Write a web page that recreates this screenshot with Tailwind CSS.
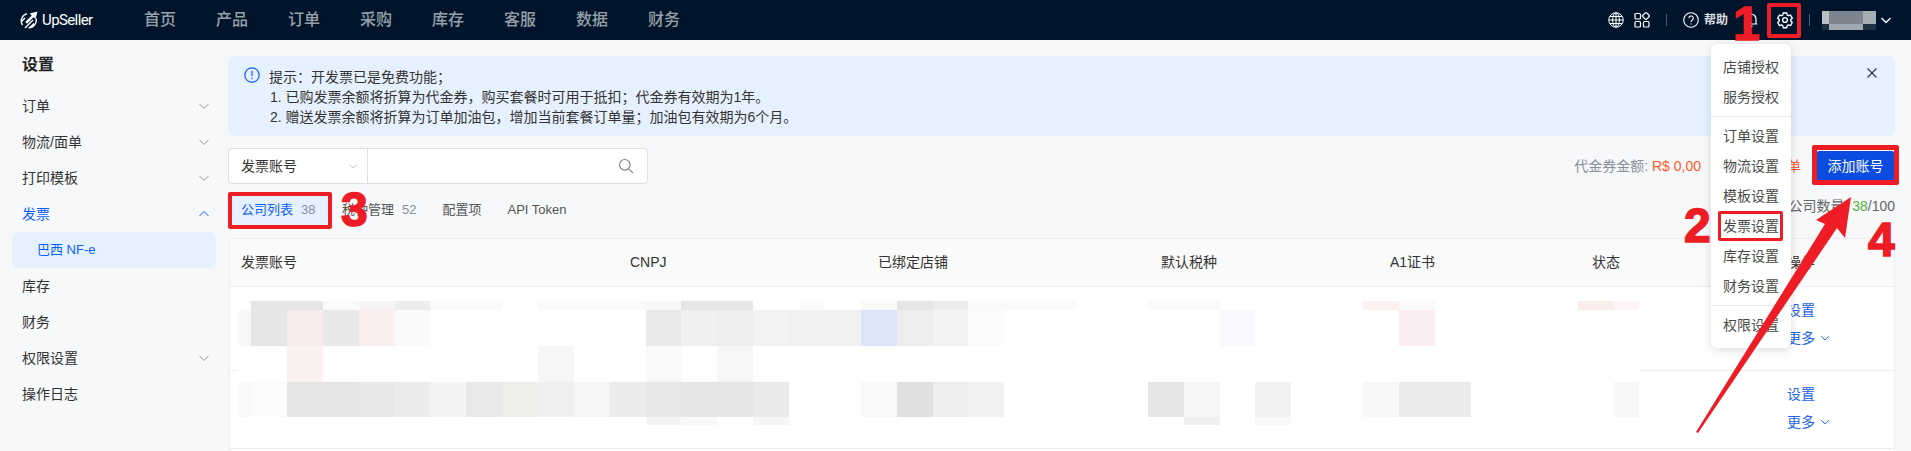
<!DOCTYPE html>
<html lang="zh">
<head>
<meta charset="utf-8">
<script src="https://cdn.jsdelivr.net/npm/@tailwindcss/browser@4"></script>
</head>
<body class="h-[451px] w-[1911px] overflow-hidden bg-[#f7f8fa] font-['Liberation_Sans','Noto_Sans_CJK_SC',sans-serif] text-[14px] text-[#333]">
<div class="relative h-[451px] w-[1911px] overflow-hidden">
  <!-- top bar -->
  <header class="flex h-10 items-center bg-[#00152b] pl-5 pr-[19px]">
    <svg class="h-[18px] w-[18px]" viewBox="0 0 18 18" fill="none" stroke="#fff" stroke-width="1.4"><path d="M7 2.600A7.500 7.500 0 0 0 2.500 14M16 7.500A7.500 7.500 0 0 1 8.500 16.800" /><path fill="#fff" stroke="none" d="M17.500.5l-2 7.500-2-1.800-6.500 6.500-1.800-1.800 6.500-6.500-2-2z"/><path d="M1.500 10.500l3.500-3.500M5 17l8-8M10 16.500l4-4" /></svg>
    <span class="ml-[4px] w-[50px] font-['Roboto',sans-serif] text-[15px] tracking-[-0.6px] text-white">UpSeller</span>
    <nav class="ml-[52px] flex gap-10 text-[16px] font-medium text-white/60">
      <span>首页</span><span>产品</span><span>订单</span><span>采购</span><span>库存</span><span>客服</span><span>数据</span><span>财务</span>
    </nav>
    <div class="ml-auto flex items-center">
      <svg class="h-4 w-4" viewBox="0 0 16 16" fill="none" stroke="#fff" stroke-width="1"><circle cx="8" cy="8" r="7.2"/><ellipse cx="8" cy="8" rx="3.4" ry="7.2"/><path d="M8 .8v14.4M.8 8h14.4M1.8 4.5h12.4M1.8 11.5h12.4"/></svg>
      <svg class="ml-[10px] h-4 w-4" viewBox="0 0 16 16" fill="none" stroke="#fff" stroke-width="1.2"><rect x="1" y="1.5" width="5.5" height="5.5" rx="1"/><rect x="1" y="9.5" width="5.5" height="5.5" rx="1"/><rect x="9.5" y="9.5" width="5.5" height="5.5" rx="1"/><rect x="9.3" y="1.3" width="5.4" height="5.4" rx="1" transform="rotate(45 12 4)"/></svg>
      <span class="ml-4 h-[12px] w-px bg-white/30"></span>
      <svg class="ml-4 h-4 w-4" viewBox="0 0 16 16" fill="none" stroke="#fff" stroke-width="1.1"><circle cx="8" cy="8" r="7.3"/><path d="M5.8 6.2a2.2 2.2 0 1 1 3.4 1.9c-.8.5-1.2 1-1.2 1.8"/><path d="M8 11.4v1.1"/></svg>
      <span class="ml-[5px] text-[12px] font-bold text-white/85">帮助</span>
      <svg class="ml-[15px] h-4 w-4" viewBox="0 0 16 16" fill="none" stroke="#fff" stroke-width="1.2"><path d="M3 12V7a5 5 0 0 1 10 0v5zM1.8 12h12.4M6.5 14.3h3"/></svg>
      <svg class="ml-[17px] h-[18px] w-[18px]" viewBox="0 0 24 24" fill="none" stroke="#fff" stroke-width="1.8" stroke-linejoin="round"><path d="M9.6 2.6h4.8l.6 2.8 1.6.9 2.7-.9 2.4 4.2-2.1 1.9v1.9l2.1 1.9-2.4 4.2-2.7-.9-1.6.9-.6 2.8H9.6L9 19.5l-1.6-.9-2.7.9-2.4-4.2 2.1-1.9v-1.9L2.300 9.600l2.400-4.200 2.700.9L9 5.400z"/><circle cx="12" cy="12" r="3.200"/></svg>
      <span class="ml-[15px] h-[12px] w-px bg-white/30"></span>
      <span class="ml-[12px] grid h-[19px] w-[54px] grid-cols-[7px_34px_13px] grid-rows-[13px_6px]">
        <i class="bg-[#b9c0c8]"></i><i class="bg-[#7d8590]"></i><i class="bg-[#a6adb5]"></i>
        <i class="bg-[#1c2f43]"></i><i class="bg-[#a2a9b2]"></i><i class="bg-[#1c2f43]"></i>
      </span>
      <svg class="ml-1 h-3 w-3" viewBox="0 0 12 12" fill="none" stroke="#fff" stroke-width="1.3"><path d="M1.500 4l4.500 4.500L10.500 4"/></svg>
    </div>
  </header>

  <div class="flex">
    <!-- sidebar -->
    <aside class="w-[228px] shrink-0 pt-4 text-[#333]">
      <div class="flex h-[18px] items-center pl-[22px] text-[16px] font-semibold text-[#222]">设置</div>
      <ul class="mt-[14px]">
        <li class="flex h-9 items-center justify-between pl-[22px] pr-[18px]">订单<svg class="h-3 w-3" viewBox="0 0 12 12" fill="none" stroke="#999"><path d="M1.500 4l4.500 4.500L10.500 4"/></svg></li>
        <li class="flex h-9 items-center justify-between pl-[22px] pr-[18px]">物流/面单<svg class="h-3 w-3" viewBox="0 0 12 12" fill="none" stroke="#999"><path d="M1.500 4l4.500 4.500L10.500 4"/></svg></li>
        <li class="flex h-9 items-center justify-between pl-[22px] pr-[18px]">打印模板<svg class="h-3 w-3" viewBox="0 0 12 12" fill="none" stroke="#999"><path d="M1.500 4l4.500 4.500L10.500 4"/></svg></li>
        <li class="flex h-9 items-center justify-between pl-[22px] pr-[18px] text-[#0b5fff]">发票<svg class="h-3 w-3" viewBox="0 0 12 12" fill="none" stroke="#0b5fff"><path d="M1.500 8l4.500-4.500L10.500 8"/></svg></li>
        <li class="mx-3 flex h-9 w-[204px] items-center rounded-md bg-[#e6f1ff] pl-[25px] text-[13px] text-[#0b5fff]">巴西 NF-e</li>
        <li class="flex h-9 items-center pl-[22px]">库存</li>
        <li class="flex h-9 items-center pl-[22px]">财务</li>
        <li class="flex h-9 items-center justify-between pl-[22px] pr-[18px]">权限设置<svg class="h-3 w-3" viewBox="0 0 12 12" fill="none" stroke="#999"><path d="M1.500 4l4.500 4.500L10.500 4"/></svg></li>
        <li class="flex h-9 items-center pl-[22px]">操作日志</li>
      </ul>
    </aside>

    <!-- main -->
    <main class="w-[1667px] pt-4">
      <div class="relative h-20 rounded-md bg-[#e6f1ff] pl-[41px] pt-[11px] leading-5 text-[#333]">
        <svg class="absolute left-4 top-[11px] h-4 w-4" viewBox="0 0 16 16" fill="none" stroke="#0b5fff" stroke-width="1.200"><circle cx="8" cy="8" r="7.200"/><path d="M8 3.800v5.400M8 10.800v1.400"/></svg>
        <p>提示：开发票已是免费功能；</p>
        <p class="pl-[1px]">1. 已购发票余额将折算为代金券，购买套餐时可用于抵扣；代金券有效期为1年。</p>
        <p class="pl-[1px]">2. 赠送发票余额将折算为订单加油包，增加当前套餐订单量；加油包有效期为6个月。</p>
        <svg class="absolute right-[18px] top-3 h-[10px] w-[10px]" viewBox="0 0 10 10" fill="none" stroke="#333" stroke-width="1.100"><path d="M.5.5l9 9M9.500.5l-9 9"/></svg>
      </div>

      <div class="mt-3 flex h-9 items-center">
        <div class="flex h-9 w-[420px] rounded-[4px] border border-[#dcdfe6] bg-white">
          <div class="flex w-[139px] items-center justify-between border-r border-[#dcdfe6] pl-3 pr-[9px]">发票账号<svg class="h-[10px] w-[10px]" viewBox="0 0 12 12" fill="none" stroke="#bbb"><path d="M1.500 4l4.500 4.500L10.500 4"/></svg></div>
          <div class="flex flex-1 items-center justify-end pr-[13px]"><svg class="h-4 w-4" viewBox="0 0 16 16" fill="none" stroke="#888" stroke-width="1.200"><circle cx="6.800" cy="6.800" r="5.300"/><path d="M10.800 10.800l4.200 4.200"/></svg></div>
        </div>
        <span class="ml-auto pr-[10px] text-[#8a8f99]">代金券金额: <span class="text-[#ff5a2c]">R$ 0,00</span></span>
        <span class="ml-[34px] text-[#ff5a2c]">发票订单</span>
        <button class="ml-4 mr-[1px] h-[30px] w-[77px] rounded-[2px] bg-[#0b4be0] text-white">添加账号</button>
      </div>

      <div class="mt-[11px] flex h-[30px] items-center text-[13px]">
        <span class="ml-[4px] flex h-[30px] w-[96px] items-center rounded-[3px] bg-[#e6f1ff] pl-[9px] text-[#0b5fff]">公司列表<span class="ml-2 text-[#8a8f99]">38</span></span>
        <span class="ml-[14px] text-[#555]">税种管理<span class="ml-2 text-[#8a8f99]">52</span></span>
        <span class="ml-[26px] text-[#555]">配置项</span>
        <span class="ml-[26px] text-[#555]">API Token</span>
        <span class="mb-2 ml-auto text-[14px] text-[#666]">公司数量: <span class="text-[#52b43a]">38</span>/100</span>
      </div>

      <div class="mt-[13px] ml-[1px] overflow-hidden rounded-t-md border border-b-0 border-[#ebedf0] bg-white">
        <div class="grid h-12 grid-cols-[389px_248px_283px_229px_202px_195px_1fr] items-center border-b border-[#ebedf0] bg-[#fafafa] pl-[11px] text-[#333]">
          <span>发票账号</span><span>CNPJ</span><span>已绑定店铺</span><span>默认税种</span><span>A1证书</span><span>状态</span><span>操作</span>
        </div>
        <div class="h-[84px] border-b border-[#ebedf0] pl-[1557px] pt-[9px] leading-7 text-[#2563eb]">
          <div>设置</div>
          <div class="flex items-center">更多<svg class="ml-[5px] h-[10px] w-[10px]" viewBox="0 0 12 12" fill="none" stroke="#2563eb" stroke-width="1.200"><path d="M1.500 4l4.500 4.500L10.500 4"/></svg></div>
        </div>
        <div class="h-[78px] border-b border-[#ebedf0] pl-[1557px] pt-[9px] leading-7 text-[#2563eb]">
          <div>设置</div>
          <div class="flex items-center">更多<svg class="ml-[5px] h-[10px] w-[10px]" viewBox="0 0 12 12" fill="none" stroke="#2563eb" stroke-width="1.200"><path d="M1.500 4l4.500 4.500L10.500 4"/></svg></div>
        </div>
        <div class="h-4"></div>
      </div>
    </main>
  </div>

  <!-- mosaic over the table rows -->
  <svg class="absolute left-0 top-0 h-[451px] w-[1911px]" viewBox="0 0 1911 451" shape-rendering="crispEdges" aria-hidden="true">
    <rect x="238" y="295" width="1401" height="130" fill="#fff"/>
    <g fill="#e5e5e5"><rect x="251" y="301" width="72" height="9"/><rect x="681" y="301" width="72" height="9"/><rect x="897" y="301" width="36" height="9"/></g>
    <g fill="#fafafa"><rect x="323" y="301" width="36" height="9"/><rect x="430" y="301" width="72" height="9"/><rect x="538" y="301" width="108" height="9"/><rect x="800" y="301" width="25" height="9"/><rect x="861" y="301" width="36" height="9"/><rect x="968" y="301" width="108" height="9"/><rect x="1148" y="301" width="72" height="9"/><rect x="1399" y="301" width="36" height="9"/></g>
    <rect x="359" y="301" width="36" height="9" fill="#f5f5f5"/><rect x="395" y="301" width="35" height="9" fill="#ececec"/><rect x="646" y="301" width="35" height="9" fill="#f7f7f7"/><rect x="933" y="301" width="35" height="9" fill="#ececec"/><rect x="1363" y="301" width="36" height="9" fill="#fdf0f0"/><rect x="1578" y="301" width="36" height="9" fill="#fbecec"/><rect x="1614" y="301" width="25" height="9" fill="#fef4f6"/>
    <rect x="238" y="310" width="13" height="36" fill="#f8f8f8"/><rect x="251" y="310" width="36" height="36" fill="#e6e6e6"/><rect x="287" y="310" width="36" height="36" fill="#f8ecec"/><rect x="323" y="310" width="36" height="36" fill="#e8e8e8"/><rect x="359" y="310" width="36" height="36" fill="#fbeeee"/><rect x="395" y="310" width="35" height="36" fill="#fafafa"/><rect x="646" y="310" width="35" height="36" fill="#e9e9e7"/><rect x="681" y="310" width="36" height="36" fill="#f0f0f0"/><rect x="717" y="310" width="36" height="36" fill="#eeeeee"/><rect x="753" y="310" width="36" height="36" fill="#f3f3f3"/><rect x="789" y="310" width="72" height="36" fill="#f1f1f1"/><rect x="861" y="310" width="36" height="36" fill="#dde6f8"/><rect x="897" y="310" width="36" height="36" fill="#eeeeee"/><rect x="933" y="310" width="35" height="36" fill="#f3f3f3"/><rect x="968" y="310" width="36" height="36" fill="#fbfbfb"/><rect x="1220" y="310" width="35" height="36" fill="#f8f9fd"/><rect x="1399" y="310" width="36" height="36" fill="#fcedf0"/>
    <rect x="287" y="346" width="36" height="36" fill="#fbf1f1"/><rect x="538" y="346" width="36" height="36" fill="#f6f6f6"/><rect x="646" y="346" width="35" height="36" fill="#f9f9f9"/><rect x="717" y="346" width="36" height="36" fill="#f7f7f7"/>
    <rect x="238" y="382" width="13" height="35" fill="#f9f9f9"/><rect x="251" y="382" width="36" height="35" fill="#fcfcfc"/><rect x="287" y="382" width="36" height="35" fill="#e6e6e6"/><rect x="323" y="382" width="36" height="35" fill="#e5e5e5"/><rect x="359" y="382" width="36" height="35" fill="#e8e8e8"/><rect x="395" y="382" width="35" height="35" fill="#ececec"/><rect x="430" y="382" width="36" height="35" fill="#f4f4f4"/><rect x="466" y="382" width="36" height="35" fill="#e8e9eb"/><rect x="502" y="382" width="36" height="35" fill="#eeeeea"/><rect x="538" y="382" width="36" height="35" fill="#efefef"/><rect x="574" y="382" width="36" height="35" fill="#f6f6f6"/><rect x="610" y="382" width="36" height="35" fill="#ececec"/><rect x="646" y="382" width="35" height="35" fill="#e8e8e8"/><rect x="681" y="382" width="72" height="35" fill="#e6e6e6"/><rect x="753" y="382" width="36" height="35" fill="#eaeaea"/><rect x="861" y="382" width="36" height="35" fill="#f9f9f9"/><rect x="897" y="382" width="36" height="35" fill="#e0e0e0"/><rect x="933" y="382" width="35" height="35" fill="#eeeeee"/><rect x="968" y="382" width="36" height="35" fill="#f1f1f1"/><rect x="1148" y="382" width="36" height="35" fill="#e6e6e6"/><rect x="1184" y="382" width="36" height="35" fill="#f4f6f5"/><rect x="1255" y="382" width="36" height="35" fill="#f2f2f2"/><rect x="1363" y="382" width="36" height="35" fill="#f7f7f7"/><rect x="1399" y="382" width="72" height="35" fill="#ebebeb"/><rect x="1614" y="382" width="25" height="35" fill="#f5f8f5"/>
    <rect x="646" y="417" width="35" height="8" fill="#f4f4f4"/><rect x="681" y="417" width="36" height="8" fill="#f8f8f8"/><rect x="753" y="417" width="36" height="8" fill="#f6f6f6"/><rect x="1184" y="417" width="36" height="8" fill="#efefef"/><rect x="1255" y="417" width="36" height="8" fill="#f9f9f9"/>
  </svg>

  <!-- settings menu -->
  <div class="absolute left-[1711px] top-[44px] w-20 rounded-md bg-white py-2 text-[#4a4a4a] shadow-[0_2px_10px_rgba(0,0,0,0.14)]">
    <div class="flex h-[30px] items-center justify-center">店铺授权</div>
    <div class="flex h-[30px] items-center justify-center">服务授权</div>
    <div class="my-1 h-px bg-[#e8e8e8]"></div>
    <div class="flex h-[30px] items-center justify-center">订单设置</div>
    <div class="flex h-[30px] items-center justify-center">物流设置</div>
    <div class="flex h-[30px] items-center justify-center">模板设置</div>
    <div class="flex h-[30px] items-center justify-center">发票设置</div>
    <div class="flex h-[30px] items-center justify-center">库存设置</div>
    <div class="flex h-[30px] items-center justify-center">财务设置</div>
    <div class="my-1 h-px bg-[#e8e8e8]"></div>
    <div class="flex h-[30px] items-center justify-center">权限设置</div>
  </div>

  <!-- red annotations -->
  <div class="absolute left-[1767px] top-[3px] h-[35px] w-[34px] rounded-[2px] border-4 border-[#ee1c25]"></div>
  <div class="absolute left-[1718px] top-[211px] h-[30px] w-[65px] rounded-[2px] border-[3px] border-[#ee1c25]"></div>
  <div class="absolute left-[228px] top-[192px] h-[37px] w-[104px] rounded-[2px] border-4 border-[#ee1c25]"></div>
  <div class="absolute left-[1812px] top-[145px] h-10 w-[87px] rounded-[2px] border-[5px] border-[#ee1c25]"></div>
  <svg class="absolute left-0 top-0 h-[451px] w-[1911px]" viewBox="0 0 1911 451" aria-hidden="true"><polygon fill="#ee1c25" points="1696,432 1825,224 1816,220 1851,197 1845,238 1837,228 1698,433"/></svg>
  <span class="absolute left-[1733px] top-0 font-['Liberation_Sans',sans-serif] text-[48px] font-bold leading-[48px] text-[#ee1c25] [-webkit-text-stroke:1.5px_#ee1c25]">1</span>
  <span class="absolute left-[1684px] top-[202px] font-['Liberation_Sans',sans-serif] text-[48px] font-bold leading-[48px] text-[#ee1c25] [-webkit-text-stroke:1.5px_#ee1c25]">2</span>
  <span class="absolute left-[341px] top-[186px] font-['Liberation_Sans',sans-serif] text-[48px] font-bold leading-[48px] text-[#ee1c25] [-webkit-text-stroke:1.5px_#ee1c25]">3</span>
  <span class="absolute left-[1868px] top-[216px] font-['Liberation_Sans',sans-serif] text-[48px] font-bold leading-[48px] text-[#ee1c25] [-webkit-text-stroke:1.5px_#ee1c25]">4</span>
</div>
</body>
</html>
